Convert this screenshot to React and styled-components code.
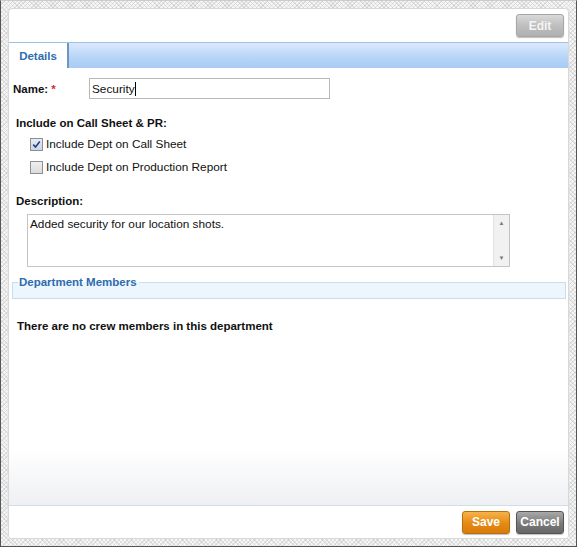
import styled, { createGlobalStyle } from 'styled-components'

const Global = createGlobalStyle`
  html, body { margin: 0; padding: 0; background: #fff; }
  body { font-family: "Liberation Sans", Arial, sans-serif; font-size: 11.8px; color: #111; }
`

const Frame = styled.div`
  width: 577px;
  height: 547px;
  box-sizing: border-box;
  padding: 7px;
  border: 1px solid #555;
  border-top-color: #ccc;
  background:
    repeating-linear-gradient(45deg, rgba(180,180,180,0.35) 0 1px, transparent 1px 3px),
    repeating-linear-gradient(-45deg, rgba(180,180,180,0.35) 0 1px, transparent 1px 3px),
    #f6f6f6;
  display: flex;
`

const Panel = styled.div`
  flex: 1;
  display: flex;
  flex-direction: column;
  background: #fff;
  border: 1px solid #d8d8d8;
  border-radius: 4px;
  overflow: hidden;
`

const Toolbar = styled.div`
  height: 33px;
  display: flex;
  align-items: center;
  justify-content: flex-end;
  padding-right: 4px;
`

const Button = styled.button`
  height: 23px;
  width: 48px;
  margin-left: 6px;
  border-radius: 3px;
  font-family: "Liberation Sans", Arial, sans-serif;
  font-size: 12px;
  font-weight: bold;
  color: #fff;
  padding: 0;
  cursor: pointer;
  box-shadow: 0 1px 1px rgba(0,0,0,0.25);
  ${p => p.$kind === 'save' && `
    background: linear-gradient(#f7b24a, #e58a14 55%, #d87b08);
    border: 1px solid #b8700f;
  `}
  ${p => p.$kind === 'cancel' && `
    background: linear-gradient(#a9a9a9, #7a7a7a 55%, #666);
    border: 1px solid #555;
  `}
  ${p => p.$kind === 'disabled' && `
    background: linear-gradient(#d9d9d9, #bdbdbd 55%, #b0b0b0);
    border: 1px solid #a5a5a5;
    color: #f4f4f4;
  `}
`

const TabBar = styled.div`
  height: 25px;
  border-top: 1px solid #9fc1e6;
  background: linear-gradient(#dbe9fb, #b5d4f8 60%, #a9cbf4);
  display: flex;
`

const Tab = styled.div`
  width: 58px;
  background: #fff;
  border-right: 2px solid #6f95c2;
  color: #2d6cb0;
  font-weight: bold;
  font-size: 11.5px;
  display: flex;
  align-items: center;
  justify-content: center;
`

const Content = styled.div`
  flex: 1;
  display: flex;
  flex-direction: column;
  padding: 10px 2px 0 3px;
  background: linear-gradient(#fff 0, #fff 380px, #eff0f3 100%);
`

const NameRow = styled.div`
  display: flex;
  align-items: center;
  height: 21px;
`

const Label = styled.div`
  font-weight: bold;
  font-size: 11.5px;
  color: #111;
  width: 76px;
  padding-left: 1px;
`

const Req = styled.span`
  color: #d52b2b;
  margin-left: 3px;
`

const TextInput = styled.div`
  width: 237px;
  height: 19px;
  border: 1px solid #b8b8b8;
  display: flex;
  align-items: center;
  padding-left: 2px;
  &::after {
    content: '';
    width: 1px;
    height: 14px;
    background: #000;
  }
`

const Heading = styled.div`
  font-weight: bold;
  font-size: 11.5px;
  margin: ${p => p.$mt || 0}px 0 0 ${p => p.$ml ?? 4}px;
  line-height: 14px;
`

const CheckRow = styled.label`
  display: flex;
  align-items: center;
  height: 14px;
  margin: ${p => p.$mt}px 0 0 18px;
  gap: 3px;
`

const Box = styled.span`
  width: 11px;
  height: 11px;
  border: 1px solid #8e8f8f;
  background: ${p => (p.$on ? 'linear-gradient(#e6ecf6, #c9d5ea)' : 'linear-gradient(#eee, #dcdcdc)')};
  display: flex;
  align-items: center;
  justify-content: center;
`

const TextArea = styled.div`
  margin: 6px 0 0 15px;
  width: 481px;
  height: 51px;
  border: 1px solid #c4c4c4;
  display: flex;
`

const AreaText = styled.div`
  flex: 1;
  padding: 2px 2px;
  line-height: 14px;
`

const Scrollbar = styled.div`
  width: 15px;
  background: #f1f1f1;
  border-left: 1px solid #e2e2e2;
  display: flex;
  flex-direction: column;
  justify-content: space-between;
  align-items: center;
  padding: 5px 0;
  color: #777;
  font-size: 6px;
  line-height: 6px;
`

const Fieldset = styled.div`
  margin: 15px 0 0 0;
  height: 15px;
  border: 1px solid #c6ddf2;
  background: #eef6fd;
  position: relative;
`

const Legend = styled.span`
  position: absolute;
  left: 5px;
  top: -8px;
  padding: 0 2px 0 1px;
  color: #2d6cb0;
  font-weight: bold;
  font-size: 11.5px;
  line-height: 14px;
  background: linear-gradient(#fff 50%, #eef6fd 50%);
`

const Footer = styled.div`
  height: 32px;
  border-top: 1px solid #d2dcea;
  display: flex;
  align-items: center;
  justify-content: flex-end;
  padding-right: 4px;
  background: #fff;
`

const Check = () => (
  <svg width="9" height="9" viewBox="0 0 9 9">
    <path d="M1.2 4.6 L3.5 7 L7.8 1.5" fill="none" stroke="#2b3f7a" strokeWidth="1.6" />
  </svg>
)

export default function App() {
  return (
    <>
      <Global />
      <Frame>
        <Panel>
          <Toolbar>
            <Button $kind="disabled">Edit</Button>
          </Toolbar>
          <TabBar>
            <Tab>Details</Tab>
          </TabBar>
          <Content>
            <NameRow>
              <Label>Name:<Req>*</Req></Label>
              <TextInput>Security</TextInput>
            </NameRow>
            <Heading $mt={17}>Include on Call Sheet &amp; PR:</Heading>
            <CheckRow $mt={7}>
              <Box $on><Check /></Box>
              Include Dept on Call Sheet
            </CheckRow>
            <CheckRow $mt={9}>
              <Box />
              Include Dept on Production Report
            </CheckRow>
            <Heading $mt={20}>Description:</Heading>
            <TextArea>
              <AreaText>Added security for our location shots.</AreaText>
              <Scrollbar>
                <span>▲</span>
                <span>▼</span>
              </Scrollbar>
            </TextArea>
            <Fieldset>
              <Legend>Department Members</Legend>
            </Fieldset>
            <Heading $mt={20} $ml={5}>There are no crew members in this department</Heading>
          </Content>
          <Footer>
            <Button $kind="save">Save</Button>
            <Button $kind="cancel">Cancel</Button>
          </Footer>
        </Panel>
      </Frame>
    </>
  )
}
